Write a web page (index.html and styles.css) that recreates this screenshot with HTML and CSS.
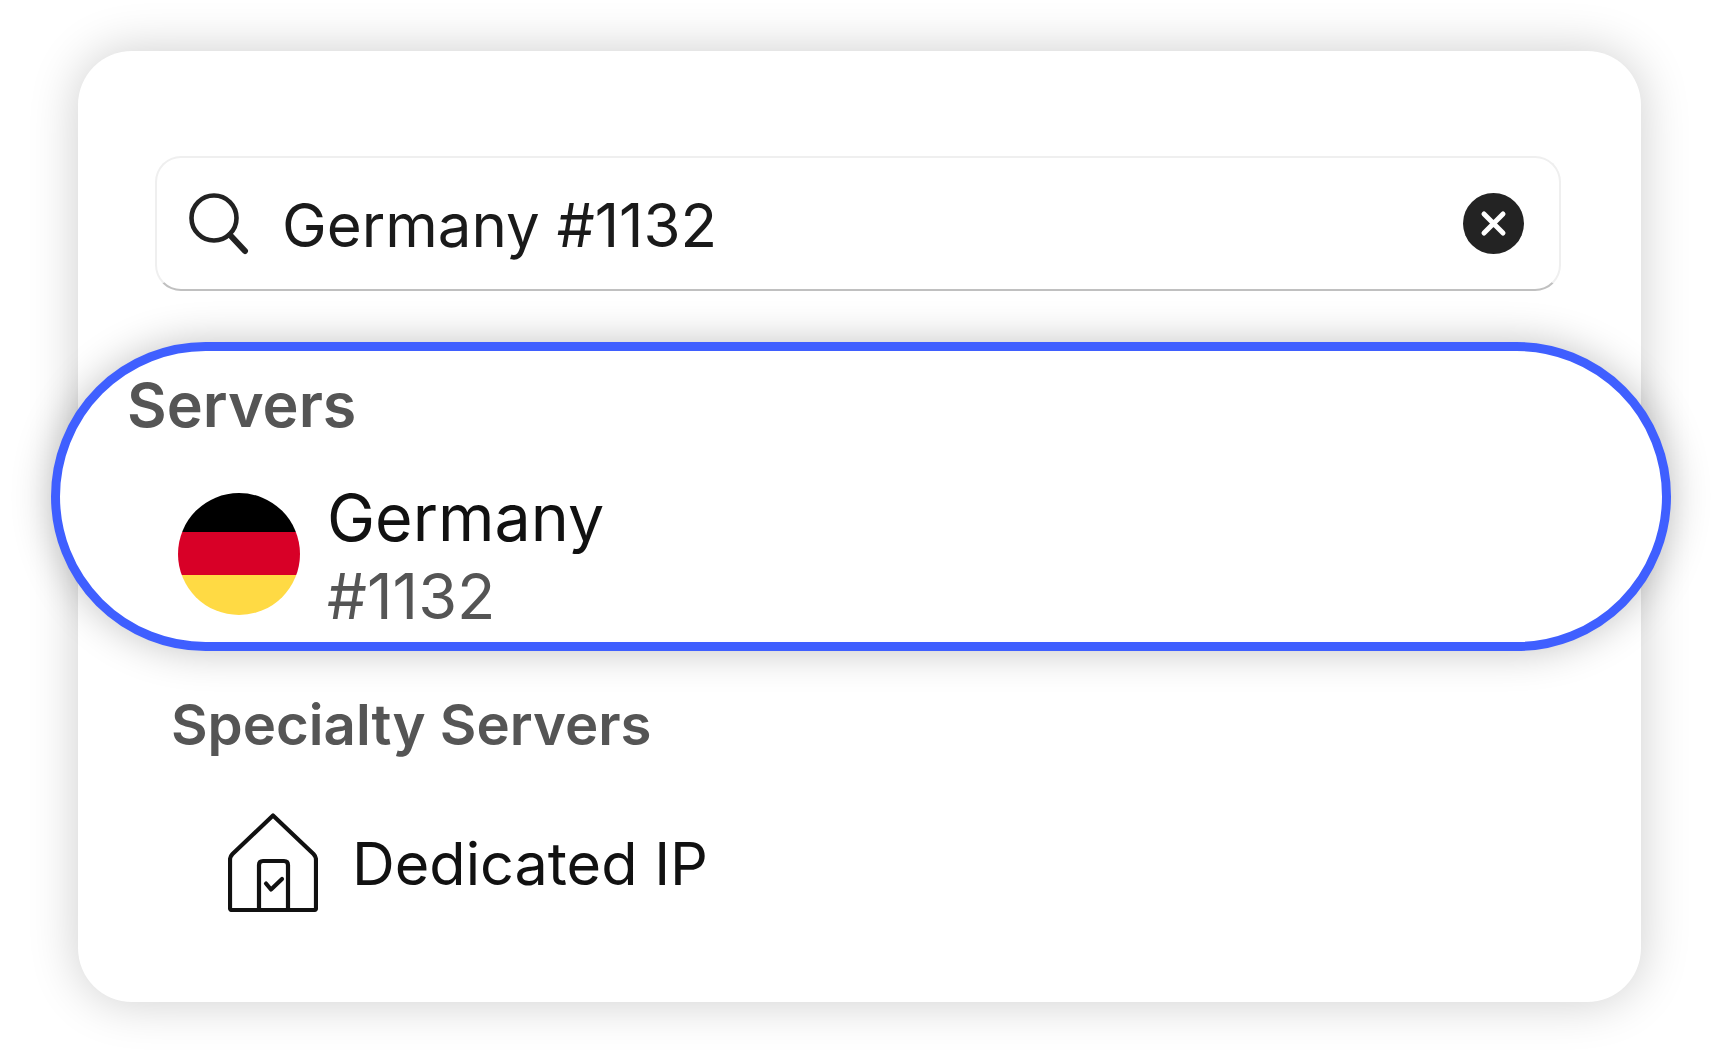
FILE: index.html
```html
<!DOCTYPE html>
<html lang="en">
<head>
<meta charset="utf-8">
<title>Server search</title>
<link rel="stylesheet" href="styles.css">
</head>
<body>
<main class="card">
  <div class="search">
    <svg class="search-icon" viewBox="0 0 60 62" width="60" height="62" aria-hidden="true">
      <circle cx="25" cy="25" r="22.5" fill="none" stroke="#222" stroke-width="4.6"/>
      <path d="M41 42 L56 58" fill="none" stroke="#222" stroke-width="6" stroke-linecap="round"/>
    </svg>
    <span class="search-text">Germany #1132</span>
    <svg class="clear-icon" viewBox="0 0 61 61" width="61" height="61" aria-hidden="true">
      <circle cx="30.5" cy="30.5" r="30.5" fill="#232323"/>
      <path d="M21 21 L40 40 M40 21 L21 40" fill="none" stroke="#fff" stroke-width="5" stroke-linecap="round"/>
    </svg>
  </div>
  <section class="pill">
    <h2 class="heading heading-servers">Servers</h2>
    <div class="server">
      <div class="flag"><span class="black"></span><span class="red"></span><span class="gold"></span></div>
      <div class="server-text">
        <div class="server-name">Germany</div>
        <div class="server-id">#1132</div>
      </div>
    </div>
  </section>
  <h2 class="heading heading-special">Specialty Servers</h2>
  <div class="dedicated">
    <svg class="house" viewBox="0 0 90 99" width="90" height="99" aria-hidden="true">
      <path d="M45 2.5 L85.5 41 Q88 43.5 88 47 V95 Q88 97 86 97 H4 Q2 97 2 95 V47 Q2 43.5 4.5 41 Z" fill="none" stroke="#111" stroke-width="4.2" stroke-linejoin="round"/>
      <path d="M31 97 V52 Q31 48 35 48 H56 Q60 48 60 52 V97" fill="none" stroke="#111" stroke-width="4.2"/>
      <path d="M38 70.5 L43 76.5 L54 66" fill="none" stroke="#111" stroke-width="4.2" stroke-linecap="round" stroke-linejoin="round"/>
    </svg>
    <span class="dedicated-text">Dedicated IP</span>
  </div>
</main>
</body>
</html>
```
FILE: styles.css
```css
html, body { margin: 0; background: #fff; }
body {
  width: 1722px;
  height: 1053px;
  padding: 51px 0 0 78px;
  box-sizing: border-box;
  overflow: hidden;
  font-family: Inter, "Liberation Sans", sans-serif;
  color: #1a1a1a;
}
.card {
  width: 1563px;
  height: 951px;
  box-sizing: border-box;
  padding: 105px 80px 0 77px;
  background: #fff;
  border-radius: 54px;
  box-shadow: 0 0 50px rgba(0, 0, 0, .2);
}
.search {
  height: 135px;
  box-sizing: border-box;
  display: flex;
  align-items: center;
  padding: 0 35px 0 32px;
  border: 2px solid #efefef;
  border-bottom-color: #c0c0c0;
  border-radius: 26px;
  background: #fff;
}
.search-icon { flex: none; }
.search-text { flex: 1; margin-left: 33px; font-size: 60px; font-weight: 420; line-height: 1; position: relative; top: 1px; }
.clear-icon { flex: none; }
.pill {
  width: 1620px;
  height: 309px;
  box-sizing: border-box;
  margin: 51px 0 0 -104px;
  padding: 24px 0 0 67px;
  border: 9px solid #3f5fff;
  border-radius: 155px;
  background: #fff;
  box-shadow: 0 0 40px rgba(0, 0, 0, .24);
}
.heading { margin: 0; font-weight: 600; color: #555; line-height: 1; }
.heading-servers { font-size: 61px; }
.heading-special { font-size: 56.3px; margin: 46px 0 0 16px; }
.server { display: flex; margin: 57px 0 0 51px; }
.flag {
  flex: none;
  width: 122px;
  height: 122px;
  border-radius: 50%;
  overflow: hidden;
  display: flex;
  flex-direction: column;
}
.black { height: 39px; background: #000; }
.red { height: 43px; background: #d80027; }
.gold { height: 40px; background: #ffda44; }
.server-text { margin: -14px 0 0 27px; }
.server-name { font-size: 64.5px; font-weight: 420; line-height: 78px; color: #111; }
.server-id { font-size: 63px; font-weight: 420; line-height: 79px; color: #555; }
.dedicated { display: flex; align-items: center; margin: 60px 0 0 73px; }
.dedicated-text { margin-left: 34px; font-size: 59.3px; font-weight: 420; line-height: 1; color: #111; position: relative; top: 1px; }
```
